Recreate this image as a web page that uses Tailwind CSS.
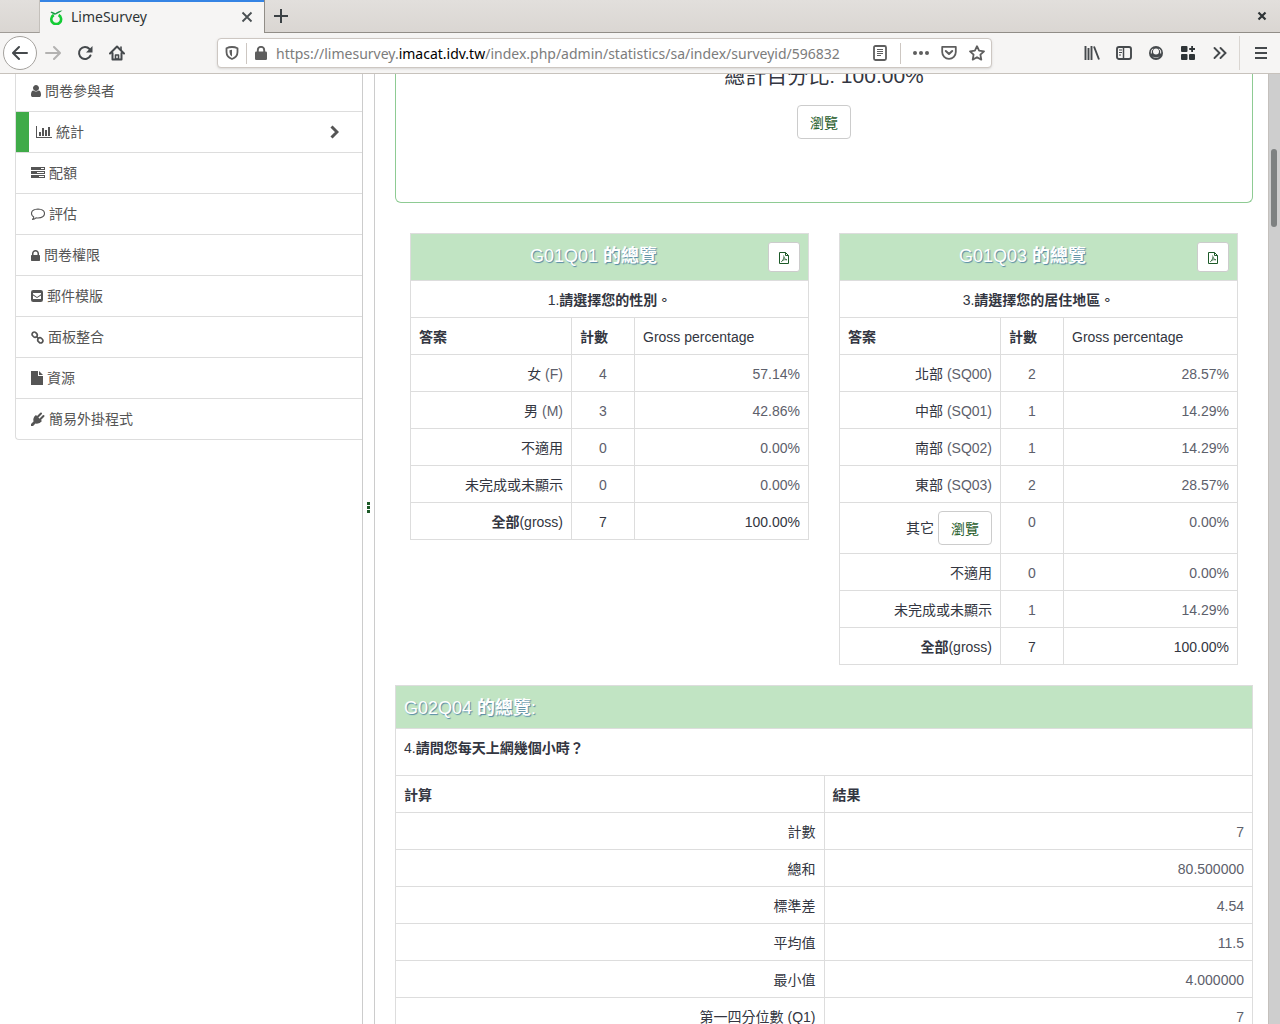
<!DOCTYPE html>
<html lang="zh-Hant">
<head>
<meta charset="utf-8">
<title>LimeSurvey</title>
<script src="https://cdn.jsdelivr.net/npm/@tailwindcss/browser@4"></script>
</head>
<body class="flex h-screen flex-col overflow-hidden bg-white font-['Liberation_Sans','Noto_Sans_CJK_TC',sans-serif] text-sm leading-5 text-[#333641]">

<!-- Tab strip -->
<header class="shrink-0 font-['Noto_Sans',sans-serif] text-[#2e3436]">
  <div class="flex h-[33px] bg-gradient-to-b from-[#e2dfdc] to-[#dad6d2]">
    <div class="w-10 rounded-tl-lg border-r border-b border-[#a09c97] border-r-[#c4c0bb]"></div>
    <div class="flex w-56 items-center border-t-2 border-[#3584e4] bg-[#f6f5f4] pr-[7px] pb-px pl-2">
      <svg class="size-4" viewBox="0 0 16 16" fill="none"><path d="M5.800 6A4.900 4.900 0 1 0 10.600 6" stroke="#14cc35" stroke-width="2.600"/><path d="M2.500 3.500l4 2.300Q9 5.500 14.500 1.500 9.500 2 7.500 4.300L3.500 2.500z" fill="#1b9a46"/></svg>
      <span class="ml-[7px] flex-1 text-sm">LimeSurvey</span>
      <button class="grid size-5 place-items-center" aria-label="Close tab"><svg class="size-3" viewBox="0 0 12 12" stroke="#4a5053" stroke-width="1.800" fill="none"><path d="M1.500 1.500l9 9M10.500 1.500l-9 9"/></svg></button>
    </div>
    <div class="flex flex-1 items-center justify-between border-b border-l border-[#918d87] pr-3 pl-2">
      <button class="grid size-4 place-items-center" aria-label="New tab"><svg class="size-4" viewBox="0 0 16 16" stroke="#3b4144" stroke-width="2" fill="none"><path d="M8 1v14M1 8h14"/></svg></button>
      <button class="grid size-3 place-items-center" aria-label="Close window"><svg class="size-2.5" viewBox="0 0 10 10" stroke="#2e3436" stroke-width="2.200" fill="none"><path d="M1.500 1.500l7 7M8.500 1.500l-7 7"/></svg></button>
    </div>
  </div>

  <!-- Navigation toolbar -->
  <nav class="flex h-[41px] items-center border-b border-[#c7c2bc] bg-[#f6f5f4] pr-1 pl-[3px] text-[#45494c]">
    <button class="grid size-[34px] place-items-center rounded-full border border-[#a5a29e] bg-white" aria-label="Back"><svg class="size-4" viewBox="0 0 16 16" fill="none" stroke="currentColor" stroke-width="2" stroke-linecap="round" stroke-linejoin="round"><path d="M15 8H1.500M7 2L1 8l6 6"/></svg></button>
    <button class="grid h-8 w-8 place-items-center text-[#b3b2b1]" aria-label="Forward"><svg class="size-4" viewBox="0 0 16 16" fill="none" stroke="currentColor" stroke-width="2" stroke-linecap="round" stroke-linejoin="round"><path d="M1 8h13.500M9 2l6 6-6 6"/></svg></button>
    <button class="grid h-8 w-8 place-items-center" aria-label="Reload"><svg class="size-4" viewBox="0 0 16 16" fill="none" stroke="currentColor" stroke-width="2" stroke-linecap="round"><path d="M13.500 10.500A6 6 0 1 1 12.500 4"/><path d="M15.500 1v6.500H9z" fill="currentColor" stroke="none"/></svg></button>
    <button class="grid h-8 w-8 place-items-center" aria-label="Home"><svg class="size-4" viewBox="0 0 16 16" fill="none" stroke="currentColor" stroke-width="2" stroke-linejoin="round" stroke-linecap="round"><path d="M1 8.500L8 1.500l7 7M3.500 8v6.500h9V8"/><path d="M6.500 14v-4h3v4zM12 2v3" stroke-width="1.600"/></svg></button>
    <div class="mx-[84px] flex h-[30px] min-w-0 flex-1 items-center rounded border border-[#cdc7c2] bg-white text-[#5e5e5e] shadow-sm">
      <button class="grid h-7 w-7 place-items-center" aria-label="Tracking protection"><svg class="size-[14px]" viewBox="0 0 14 14" fill="none" stroke="currentColor" stroke-width="1.800"><path d="M7 1Q10 1 12.500 2.200V6q0 5-5.500 7Q1.500 11 1.500 6V2.200Q4 1 7 1z" stroke-linejoin="round"/><path d="M7 3.800v6.600Q4.500 9 4.500 6V4.200z" fill="currentColor" stroke="none"/></svg></button>
      <span class="h-[21px] w-px bg-[#cdc7c2]"></span>
      <svg class="mx-2 h-[14px] w-3" viewBox="0 0 12 14"><rect y="5.500" width="12" height="8.500" rx="1.200" fill="#5e5e5e"/><path d="M2.800 7V4a3.200 3.200 0 0 1 6.400 0v3" fill="none" stroke="#5e5e5e" stroke-width="1.900"/></svg>
      <div role="textbox" contenteditable="true" aria-label="Address" class="ml-px flex-1 overflow-hidden pt-[2px] text-sm whitespace-nowrap text-[#7c7c7c] outline-none">https://limesurvey.<span class="text-black">imacat.idv.tw</span>/index.php/admin/statistics/sa/index/surveyid/596832</div>
      <button class="grid h-7 w-7 place-items-center" aria-label="Reader view"><svg class="size-4" viewBox="0 0 16 16" fill="none" stroke="currentColor"><rect x="2" y="1" width="12" height="14" rx="1.500" stroke-width="1.800"/><path d="M5 4.500h6M5 6.500h6M5 8.500h6M5 10.500h4"/></svg></button>
      <span class="mx-[6px] h-[21px] w-px bg-[#cdc7c2]"></span>
      <button class="grid h-7 w-7 place-items-center" aria-label="Page actions"><svg class="size-4" viewBox="0 0 16 16" fill="currentColor"><circle cx="2" cy="8" r="2"/><circle cx="8" cy="8" r="2"/><circle cx="14" cy="8" r="2"/></svg></button>
      <button class="grid h-7 w-7 place-items-center" aria-label="Pocket"><svg class="size-4" viewBox="0 0 16 16" fill="none" stroke="currentColor" stroke-width="1.800" stroke-linecap="round" stroke-linejoin="round"><path d="M1.200 1.800h13.600V7a6.800 6.800 0 0 1-13.600 0z"/><path d="M4.800 6L8 9l3.200-3" stroke-width="2"/></svg></button>
      <button class="grid h-7 w-7 place-items-center" aria-label="Bookmark"><svg class="size-4" viewBox="0 0 16 16" fill="none" stroke="currentColor" stroke-width="1.800" stroke-linejoin="round"><path d="M8 1.200l2.100 4.500 4.900.6-3.600 3.400.9 4.900L8 12.200l-4.300 2.400.9-4.900L1 6.300l4.900-.6z"/></svg></button>
    </div>
    <button class="grid h-8 w-8 place-items-center" aria-label="Library"><svg class="size-4" viewBox="0 0 16 16" fill="none" stroke="currentColor" stroke-width="1.900"><path d="M1.500 1v14M4.500 3v12M7.500 1v14M10 1.500L15 14.500"/></svg></button>
    <button class="grid h-8 w-8 place-items-center" aria-label="Sidebars"><svg class="size-4" viewBox="0 0 16 16" fill="none" stroke="currentColor"><rect x="1" y="2" width="14" height="12" rx="2" stroke-width="1.900"/><path d="M7.500 2v12" stroke-width="1.500"/><path d="M3 5h3M3 7.500h3M3 10h2"/></svg></button>
    <button class="grid h-8 w-8 place-items-center" aria-label="Account"><svg class="size-4" viewBox="0 0 16 16"><circle cx="8" cy="8" r="7" fill="currentColor"/><circle cx="8" cy="6.500" r="3" fill="#f6f5f4"/><path d="M4.200 11.200Q8 13.800 11.800 11.200 8 15 4.200 11.200z" fill="#f6f5f4"/><path d="M3.300 8.500A4.900 4.900 0 0 1 4.800 3.800M12.700 8.500a4.900 4.900 0 0 0-1.500-4.700" fill="none" stroke="#f6f5f4"/></svg></button>
    <button class="grid h-8 w-8 place-items-center text-[#2e3436]" aria-label="Extensions"><svg class="size-4" viewBox="0 0 16 16" fill="currentColor"><rect x="1" y="1" width="6.500" height="6" rx="1"/><rect x="1" y="9" width="6.500" height="6" rx="1"/><rect x="9" y="9" width="6" height="6" rx="1"/><path d="M11.200 1h1.800v2.100h2v1.800h-2V7h-1.800V4.900h-2V3.100h2z"/></svg></button>
    <button class="grid h-8 w-8 place-items-center" aria-label="More tools"><svg class="size-4" viewBox="0 0 16 16" fill="none" stroke="currentColor" stroke-width="1.900" stroke-linecap="round"><path d="M2.500 3l5 5-5 5M8.500 3l5 5-5 5"/></svg></button>
    <span class="mr-[5px] ml-[3px] h-[34px] w-px bg-[#dad6d2]"></span>
    <button class="grid h-8 w-[31px] place-items-center" aria-label="Menu"><svg class="h-3 w-3" viewBox="0 0 12 12" stroke="currentColor" stroke-width="2" fill="none"><path d="M0 1h12M0 6h12M0 11h12"/></svg></button>
  </nav>
</header>

<div class="flex min-h-0 flex-1">
  <!-- Survey menu -->
  <aside class="w-[363px] shrink-0 overflow-hidden border-r border-[#ccc] pl-[15px]">
    <ul class="-mt-[3px] overflow-hidden rounded-bl border-b border-l border-[#ddd] text-[#555] [&_a]:flex [&_a]:h-10 [&_a]:items-center [&_a]:gap-1 [&_a]:px-[15px] [&_li]:border-b [&_li]:border-[#ddd] [&_li:last-child]:border-b-0">
      <li><a href="#"><svg class="h-3 w-[10px]" viewBox="256 128 1280 1536" fill="currentColor"><path d="M1536 1399q0 109-62.500 187t-150.500 78h-854q-88 0-150.500-78t-62.500-187q0-85 8.500-160.500t31.500-152 58.500-131 94-89 134.500-34.500q131 128 313 128t313-128q76 0 134.500 34.500t94 89 58.500 131 31.500 152 8.500 160.500zm-256-887q0 159-112.500 271.500t-271.500 112.500-271.500-112.500-112.500-271.500 112.500-271.500 271.500-112.500 271.500 112.500 112.500 271.500z"/></svg>問卷參與者</a></li>
      <li class="flex"><span class="w-[13px] bg-[#3fab48]"></span><a href="#" class="flex-1 !pl-[7px]"><svg class="h-[14px] w-4" viewBox="0 0 16 14" fill="currentColor"><path d="M0 1h1v11h15v1H0zM3 7h2v4H3zM6 3h2v8H6zM9 5h2v6H9zM12 2h2v9h-2z"/></svg>統計<svg class="mr-2 ml-auto h-[14px] w-[9px]" viewBox="0 0 9 14" fill="none" stroke="currentColor" stroke-width="3"><path d="M1.500 1.500L7 7l-5.500 5.500"/></svg></a></li>
      <li><a href="#"><svg class="h-[14px] w-[14px]" viewBox="0 0 14 14" fill="currentColor" fill-rule="evenodd"><path d="M0 1h14v3H0zM10 2v1h3V2zM0 5h14v3H0zM6 6v1h7V6zM0 9h14v3H0zM8 10v1h5v-1z"/></svg>配額</a></li>
      <li><a href="#"><svg class="h-[14px] w-[14px]" viewBox="0 0 14 14" fill="none" stroke="currentColor" stroke-linejoin="round"><path d="M7 2q6.500.3 6.500 4.500T7 11q-1 0-2-.2-1.500 1.500-3.500 1.700 1.200-1.200 1.300-2.500Q.5 8.700.5 6.500.5 2.300 7 2z" stroke-width="1.100"/></svg>評估</a></li>
      <li><a href="#"><svg class="h-[11px] w-[9px]" viewBox="320 128 1152 1408" fill="currentColor"><path d="M640 768h512v-192q0-106-75-181t-181-75-181 75-75 181v192zm832 96v576q0 40-28 68t-68 28h-960q-40 0-68-28t-28-68v-576q0-40 28-68t68-28h32v-192q0-184 132-316t316-132 316 132 132 316v192h32q40 0 68 28t28 68z"/></svg>問卷權限</a></li>
      <li><a href="#"><svg class="size-3" viewBox="0 0 12 12"><rect width="12" height="12" rx="2.200" fill="currentColor"/><path d="M2 3h8v1.200L6 7 2 4.200zM2 5.400L6 8.100l4-2.700V9H2z" fill="#fff"/></svg>郵件模版</a></li>
      <li><a href="#"><svg class="size-[13px]" viewBox="0 0 13 13" fill="none" stroke="currentColor" stroke-width="1.700"><rect x="-2.800" y="-2.200" width="5.600" height="4.400" rx="2.100" transform="translate(3.700 3.700) rotate(45)"/><rect x="-2.800" y="-2.200" width="5.600" height="4.400" rx="2.100" transform="translate(9.300 9.300) rotate(45)"/><path d="M5 5l3 3"/></svg>面板整合</a></li>
      <li><a href="#"><svg class="h-[14px] w-3" viewBox="0 0 12 14" fill="currentColor"><path d="M0 0h7v5h5v9H0zM8 0l4 4H8z"/></svg>資源</a></li>
      <li><a href="#"><svg class="size-[14px]" viewBox="0 0 14 14" fill="none" stroke="currentColor" stroke-linecap="round"><path d="M5 3l6 6q-2.500 3.200-6.500 2.500L2 14H0v-2l2.500-2.500Q1.500 5.500 5 3z" fill="currentColor" stroke="none"/><path d="M7 4.500l3-3M9.500 7l3-3" stroke-width="2"/></svg>簡易外掛程式</a></li>
    </ul>
  </aside>

  <!-- Resize handle -->
  <div class="flex w-3 shrink-0 flex-col items-center justify-center gap-px border-r border-[#ccc] pb-[84px]">
    <span class="size-[3px] bg-[#1d5a28]"></span><span class="size-[3px] bg-[#1d5a28]"></span><span class="size-[3px] bg-[#1d5a28]"></span>
  </div>

  <!-- Statistics -->
  <main class="min-w-0 flex-1 overflow-hidden pr-[15px] pl-5">
    <section class="-mt-[10px] flex h-[139px] flex-col items-center rounded-b-md border border-t-0 border-[#8ecb93]">
      <h4 class="text-[21px] leading-6">總計百分比: 100.00%</h4>
      <button class="mt-[17px] h-[34px] rounded border border-[#ccc] bg-white px-3 pt-[2px] text-[#1d5a28]">瀏覽</button>
    </section>

    <div class="mt-[30px] grid grid-cols-2 items-start gap-[30px] px-[15px]">
      <table class="w-full table-fixed border-collapse [&_td]:border [&_td]:border-[#ddd] [&_td]:px-2 [&_td]:pt-[2px] [&_td]:text-right [&_td]:text-[#5d606b] [&_td:nth-child(2)]:text-center [&_th]:border [&_th]:border-[#ddd] [&_th]:px-2 [&_th]:pt-[2px] [&_th]:font-normal [&_tr]:h-[37px]">
        <colgroup><col class="w-[161px]"><col class="w-[63px]"><col></colgroup>
        <thead>
          <tr class="!h-[47px] bg-[#c1e4c3]"><th colspan="3" class="!pt-0"><div class="flex items-center"><h4 class="flex-1 pb-[2px] text-lg leading-5 text-white [text-shadow:1px_1px_1px_#5588a5]">G01Q01 <b class="font-bold">的總覽</b></h4><button class="grid h-[30px] w-8 place-items-center rounded-[3px] border border-[#ccc] bg-white pt-px text-[#1d5a28]" aria-label="PDF"><svg class="h-3 w-[10px]" viewBox="0 0 10 12" fill="none" stroke="currentColor"><path d="M.5.500h6l3 3v8h-9zM6.500.500v3h3"/><path d="M4.500 3.500q.5 4 3.500 4.500M5 5q-.5 4-3 5M3 8.500q2-1 5-.8" stroke-width=".7"/></svg></button></div></th></tr>
          <tr><th colspan="3">1.<b>請選擇您的性別。</b></th></tr>
          <tr class="text-left"><th><b>答案</b></th><th><b>計數</b></th><th>Gross percentage</th></tr>
        </thead>
        <tbody>
          <tr><th class="text-right">女 <span class="text-[#5d606b]">(F)</span></th><td>4</td><td>57.14%</td></tr>
          <tr><th class="text-right">男 <span class="text-[#5d606b]">(M)</span></th><td>3</td><td>42.86%</td></tr>
          <tr><th class="text-right">不適用</th><td>0</td><td>0.00%</td></tr>
          <tr><th class="text-right">未完成或未顯示</th><td>0</td><td>0.00%</td></tr>
          <tr><th class="text-right"><b>全部</b>(gross)</th><td class="!text-[#333641]">7</td><td class="!text-[#333641]">100.00%</td></tr>
        </tbody>
      </table>

      <table class="w-full table-fixed border-collapse [&_td]:border [&_td]:border-[#ddd] [&_td]:px-2 [&_td]:pt-[2px] [&_td]:text-right [&_td]:text-[#5d606b] [&_td:nth-child(2)]:text-center [&_th]:border [&_th]:border-[#ddd] [&_th]:px-2 [&_th]:pt-[2px] [&_th]:font-normal [&_tr]:h-[37px]">
        <colgroup><col class="w-[161px]"><col class="w-[63px]"><col></colgroup>
        <thead>
          <tr class="!h-[47px] bg-[#c1e4c3]"><th colspan="3" class="!pt-0"><div class="flex items-center"><h4 class="flex-1 pb-[2px] text-lg leading-5 text-white [text-shadow:1px_1px_1px_#5588a5]">G01Q03 <b class="font-bold">的總覽</b></h4><button class="grid h-[30px] w-8 place-items-center rounded-[3px] border border-[#ccc] bg-white pt-px text-[#1d5a28]" aria-label="PDF"><svg class="h-3 w-[10px]" viewBox="0 0 10 12" fill="none" stroke="currentColor"><path d="M.5.500h6l3 3v8h-9zM6.500.500v3h3"/><path d="M4.500 3.500q.5 4 3.500 4.500M5 5q-.5 4-3 5M3 8.500q2-1 5-.8" stroke-width=".7"/></svg></button></div></th></tr>
          <tr><th colspan="3">3.<b>請選擇您的居住地區。</b></th></tr>
          <tr class="text-left"><th><b>答案</b></th><th><b>計數</b></th><th>Gross percentage</th></tr>
        </thead>
        <tbody>
          <tr><th class="text-right">北部 <span class="text-[#5d606b]">(SQ00)</span></th><td>2</td><td>28.57%</td></tr>
          <tr><th class="text-right">中部 <span class="text-[#5d606b]">(SQ01)</span></th><td>1</td><td>14.29%</td></tr>
          <tr><th class="text-right">南部 <span class="text-[#5d606b]">(SQ02)</span></th><td>1</td><td>14.29%</td></tr>
          <tr><th class="text-right">東部 <span class="text-[#5d606b]">(SQ03)</span></th><td>2</td><td>28.57%</td></tr>
          <tr class="!h-[51px]"><th class="!pt-0"><div class="flex items-center justify-end gap-1">其它<button class="h-[34px] rounded border border-[#ccc] bg-white px-3 pt-[2px] text-[#1d5a28]">瀏覽</button></div></th><td class="!pt-[9px] align-top">0</td><td class="!pt-[9px] align-top">0.00%</td></tr>
          <tr><th class="text-right">不適用</th><td>0</td><td>0.00%</td></tr>
          <tr><th class="text-right">未完成或未顯示</th><td>1</td><td>14.29%</td></tr>
          <tr><th class="text-right"><b>全部</b>(gross)</th><td class="!text-[#333641]">7</td><td class="!text-[#333641]">100.00%</td></tr>
        </tbody>
      </table>
    </div>

    <table class="mt-5 w-full table-fixed border-collapse [&_td]:border [&_td]:border-[#ddd] [&_td]:px-2 [&_td]:pt-[2px] [&_td]:text-right [&_td]:text-[#5d606b] [&_th]:border [&_th]:border-[#ddd] [&_th]:px-2 [&_th]:pt-[2px] [&_th]:font-normal [&_tr]:h-[37px]">
      <thead class="text-left">
        <tr class="!h-[43px] bg-[#c1e4c3]"><th colspan="2"><h4 class="text-lg leading-5 text-white [text-shadow:1px_1px_1px_#5588a5]">G02Q04 <b>的總覽</b>:</h4></th></tr>
        <tr class="!h-[47px]"><th colspan="2" class="pb-[10px]">4.<b>請問您每天上網幾個小時？</b></th></tr>
        <tr><th><b>計算</b></th><th><b>結果</b></th></tr>
      </thead>
      <tbody>
        <tr><th class="text-right">計數</th><td>7</td></tr>
        <tr><th class="text-right">總和</th><td>80.500000</td></tr>
        <tr><th class="text-right">標準差</th><td>4.54</td></tr>
        <tr><th class="text-right">平均值</th><td>11.5</td></tr>
        <tr><th class="text-right">最小值</th><td>4.000000</td></tr>
        <tr><th class="text-right">第一四分位數 (Q1)</th><td>7</td></tr>
      </tbody>
    </table>
  </main>

  <!-- Scrollbar -->
  <div class="w-3 shrink-0 border-l border-[#c4c0bc] bg-[#cecece] pt-[75px] pl-[2px]"><div class="h-[78px] w-[6px] rounded-full bg-[#7e8181]"></div></div>
</div>
</body>
</html>
